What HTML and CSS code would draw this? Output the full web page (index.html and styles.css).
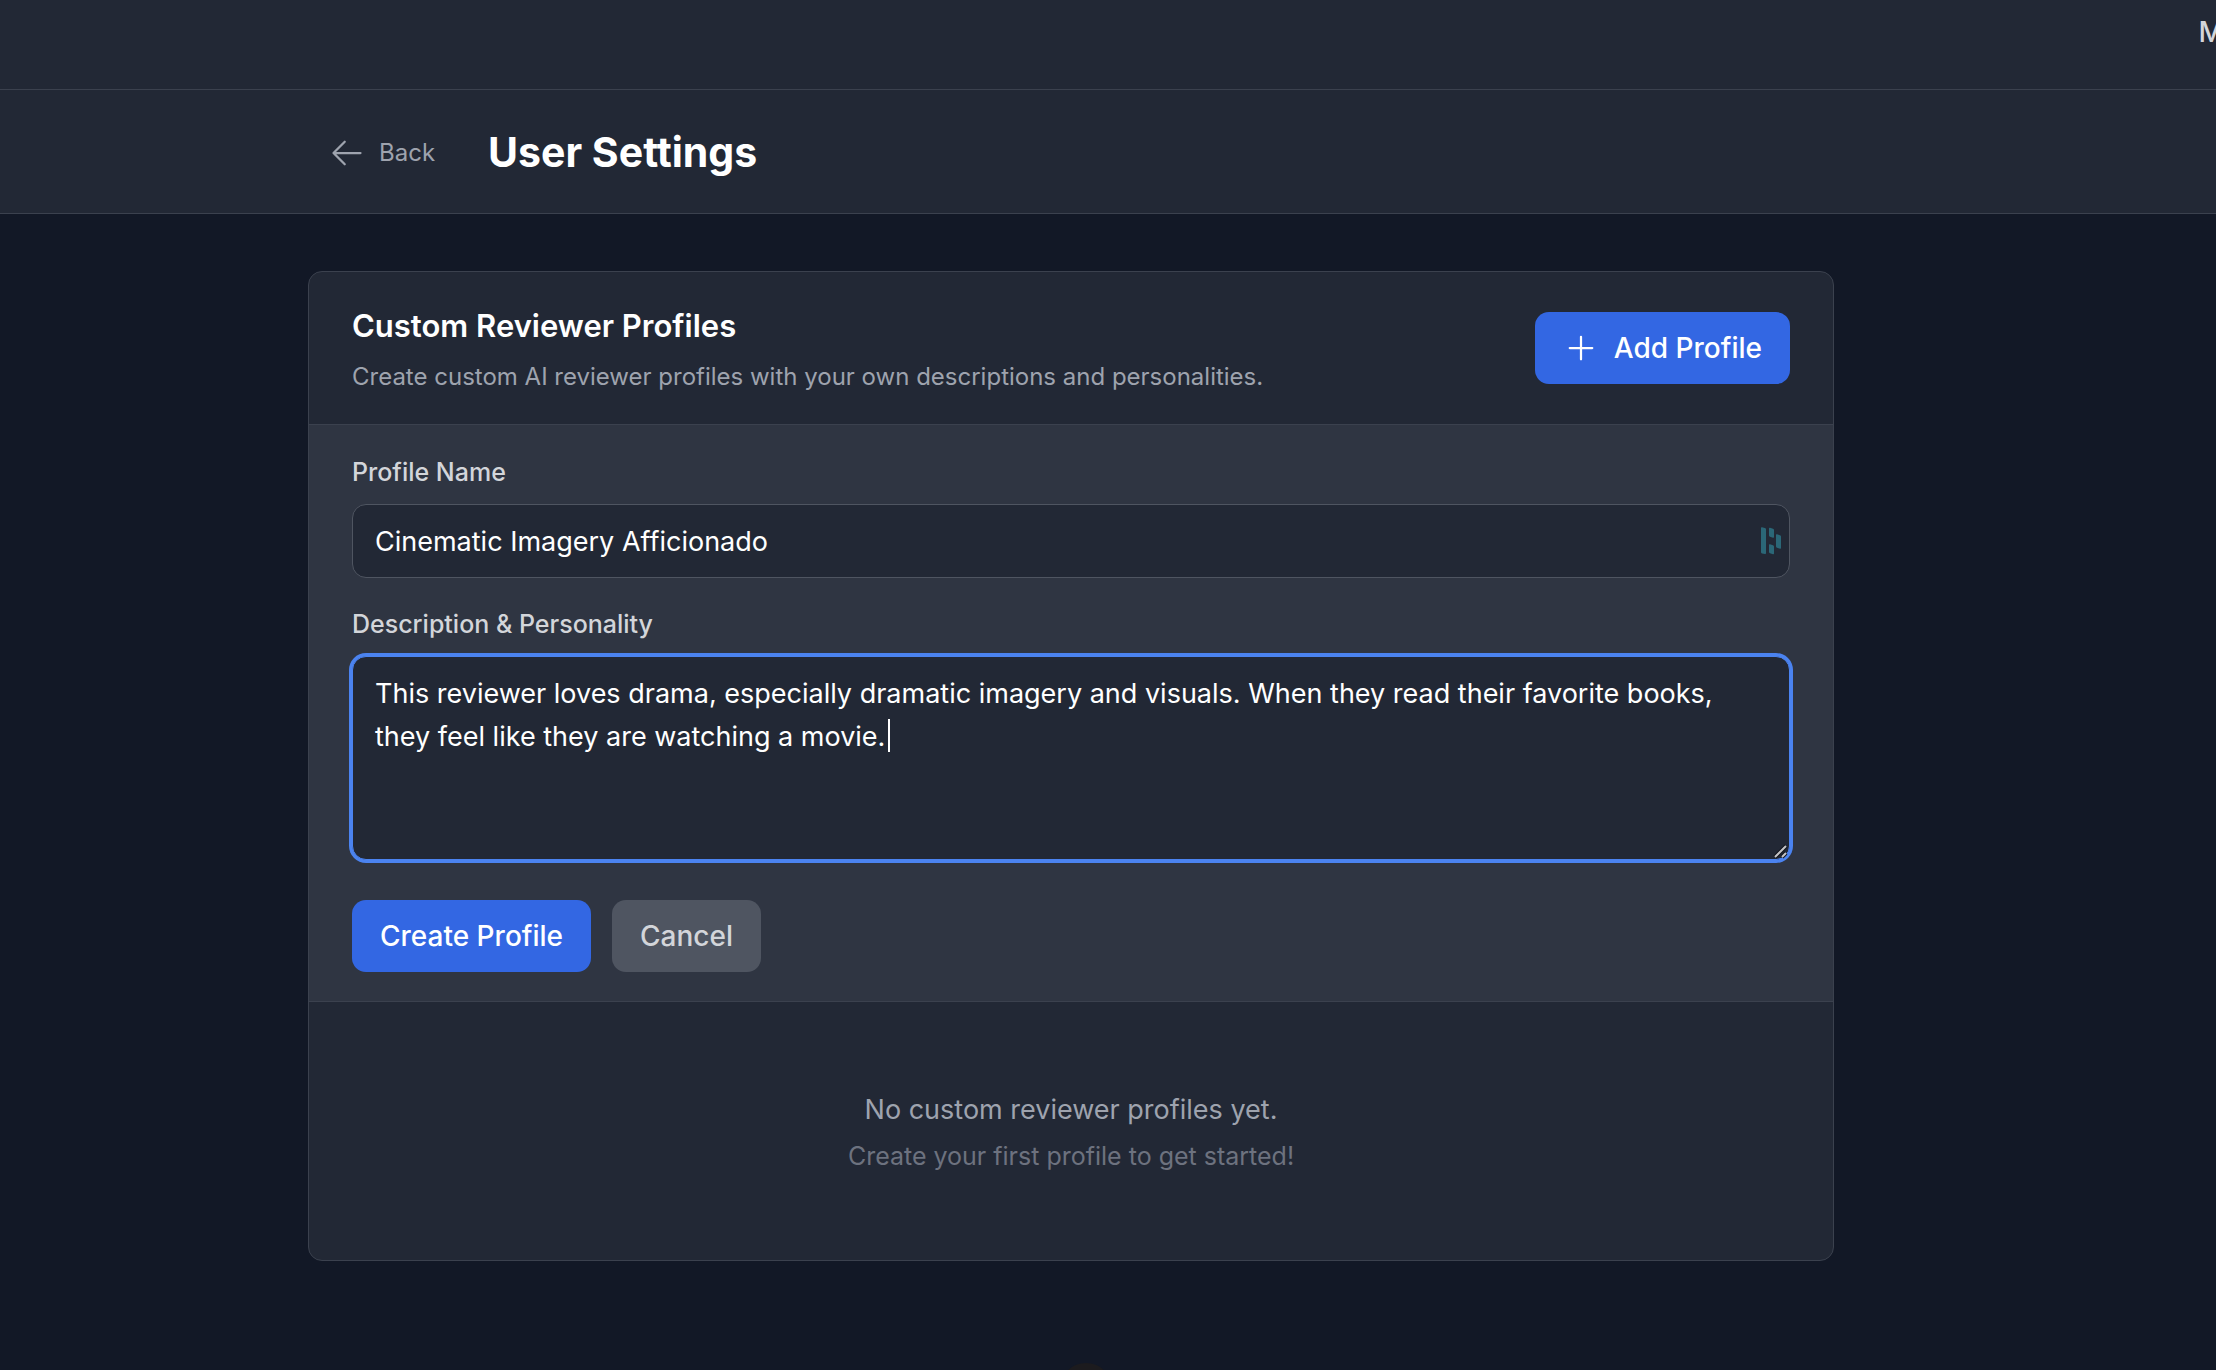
FILE: index.html
```html
<!DOCTYPE html>
<html lang="en">
<head>
<meta charset="utf-8">
<title>User Settings</title>
<link rel="stylesheet" href="styles.css">
</head>
<body>
<nav class="topbar"><a class="topbar-link" href="#">M</a></nav>

<header class="page-header">
  <div class="container page-header-row">
    <a class="back-link" href="#">
      <svg class="icon" viewBox="0 0 24 24" aria-hidden="true"><path d="M10.5 19.5 3 12m0 0 7.5-7.5M3 12h18"/></svg>
      Back
    </a>
    <h1 class="page-title">User Settings</h1>
  </div>
</header>

<main class="main">
  <section class="container card">
    <div class="card-header">
      <div>
        <h2 class="card-title">Custom Reviewer Profiles</h2>
        <p class="card-text">Create custom AI reviewer profiles with your own descriptions and personalities.</p>
      </div>
      <button class="button button-primary" type="button">
        <svg class="icon" viewBox="0 0 24 24" aria-hidden="true"><path d="M12 4.500v15m7.500-7.500h-15"/></svg>
        Add Profile
      </button>
    </div>

    <form class="form">
      <div class="field">
        <label class="label" for="profile-name">Profile Name</label>
        <div class="control">
          <input class="input" id="profile-name" type="text" value="Cinematic Imagery Afficionado">
          <svg class="input-badge" viewBox="0 0 20 28" aria-hidden="true">
            <path d="M0 1q0-1 1-.7l3 .8q1 .3 1 1.200V26q0 1.300-1 1.100l-3-.6q-1-.3-1-1.200zM8 1.500q0-1 1-.7l3 1q1 .3 1 1.200v7q0 1-1 .7l-3-1q-1-.3-1-1.200zM8 18q0-1 1-.7l3 1q1 .3 1 1.200v7q0 1-1 .7l-3-1q-1-.3-1-1.200zM15 8q0-1 1-.7l3 1q1 .3 1 1.200v11.500q0 1-1 .7l-3-1q-1-.3-1-1.200z"/>
          </svg>
        </div>
      </div>
      <div class="field">
        <label class="label" for="profile-description">Description &amp; Personality</label>
        <div class="control">
          <textarea class="input textarea is-focused" id="profile-description" rows="4">This reviewer loves drama, especially dramatic imagery and visuals. When they read their favorite books, they feel like they are watching a movie.</textarea>
          <span class="caret"></span>
          <svg class="resize-grip" viewBox="0 0 16 16" aria-hidden="true">
            <path class="grip-edge" d="M3 14 14 3M10 14l4-4"/>
            <path class="grip-line" d="M3 14 14 3M10 14l4-4"/>
          </svg>
        </div>
      </div>
      <div class="actions">
        <button class="button button-primary" type="button">Create Profile</button>
        <button class="button button-muted" type="button">Cancel</button>
      </div>
    </form>

    <div class="empty">
      <p class="empty-title">No custom reviewer profiles yet.</p>
      <p class="empty-hint">Create your first profile to get started!</p>
    </div>
  </section>
</main>
<div class="floating-dot"></div>
</body>
</html>
```
FILE: styles.css
```css
:root {
  --page: #121826;
  --panel: #222835;
  --raised: #2f3542;
  --line: #3b414e;
  --line-strong: #4f5561;
  --blue: #3367e3;
  --ring: #4b83f0;
  --text: #ffffff;
  --text-soft: #d3d5da;
  --text-muted: #9ea3ae;
  --text-faint: #6d727f;
}

* { box-sizing: border-box; }

body {
  margin: 0;
  min-height: 100vh;
  overflow: hidden;
  background: var(--page);
  color: var(--text);
  font-family: Inter, "Liberation Sans", sans-serif;
  font-size: 28px;
  line-height: 43px;
}

h1, h2, p { margin: 0; }
a { color: inherit; text-decoration: none; }

.container { max-width: 1526px; margin: 0 auto; }

.icon {
  flex: none;
  width: 36px;
  height: 36px;
  fill: none;
  stroke: currentColor;
  stroke-width: 1.5;
  stroke-linecap: round;
  stroke-linejoin: round;
}

.topbar {
  display: flex;
  justify-content: flex-end;
  height: 90px;
  padding-top: 11px;
  overflow: hidden;
  background: var(--panel);
  border-bottom: 1px solid var(--line);
}
.topbar-link { margin-right: -8px; color: var(--text-soft); font-weight: 500; }

.page-header {
  padding: 37px 74px 35px 0;
  background: var(--panel);
  border-bottom: 1px solid var(--line);
}
.page-header-row { display: flex; align-items: center; gap: 32px; }
.back-link {
  display: flex;
  align-items: center;
  gap: 14px;
  padding: 0 21px;
  color: var(--text-muted);
  font-size: 24px;
}
.page-title { font-size: 41px; font-weight: 700; line-height: 51px; }

.main { padding: 57px 74px 57px 0; }

.card {
  overflow: hidden;
  background: var(--panel);
  border: 1px solid var(--line);
  border-radius: 14px;
}
.card-header {
  display: flex;
  align-items: center;
  justify-content: space-between;
  padding: 29px 43px;
  border-bottom: 1px solid var(--line);
}
.card-title { margin-bottom: 8px; font-size: 31px; font-weight: 600; line-height: 50px; }
.card-text { color: var(--text-muted); font-size: 24px; line-height: 36px; }

.button {
  display: flex;
  align-items: center;
  gap: 15px;
  height: 72px;
  padding: 0 28px;
  border: 0;
  border-radius: 14px;
  font: inherit;
  font-weight: 500;
}
.button-primary { background: var(--blue); color: var(--text); }
.button-muted { background: var(--line-strong); color: var(--text-soft); }

.form {
  padding: 29px 43px;
  background: var(--raised);
  border-bottom: 1px solid var(--line);
}
.field { margin-bottom: 28px; }
.label {
  display: block;
  margin-bottom: 14px;
  color: var(--text-soft);
  font-size: 25px;
  font-weight: 500;
  line-height: 36px;
}
.control { position: relative; }
.input {
  display: block;
  width: 100%;
  height: 74px;
  padding: 15px 22px 14px;
  background: var(--panel);
  border: 1px solid var(--line-strong);
  border-radius: 14px;
  outline: 0;
  color: var(--text);
  font: inherit;
  font-size: 27px;
}
.input-badge {
  position: absolute;
  top: 23px;
  right: 9px;
  width: 20px;
  height: 28px;
  fill: #2b6777;
}
.textarea { height: 204px; resize: vertical; }
.textarea::-webkit-resizer { background: transparent; }
.is-focused { border-color: var(--ring); box-shadow: 0 0 0 3px var(--ring); }
.caret {
  position: absolute;
  top: 63px;
  left: 536px;
  width: 2px;
  height: 33px;
  background: var(--text);
}
.resize-grip {
  position: absolute;
  right: 2px;
  bottom: 1px;
  width: 16px;
  height: 16px;
  fill: none;
  pointer-events: none;
}
.grip-edge { stroke: #10141c; stroke-width: 4; }
.grip-line { stroke: #c4c4c6; stroke-width: 2; }
.actions { display: flex; gap: 21px; padding-top: 12px; }

.empty { padding: 86px 43px; text-align: center; }
.empty-title { margin-bottom: 7px; color: var(--text-muted); font-size: 27px; }
.empty-hint { color: var(--text-faint); font-size: 25px; line-height: 36px; }

.floating-dot {
  position: fixed;
  bottom: -47px;
  left: 49%;
  width: 54px;
  height: 54px;
  margin-left: -27px;
  border-radius: 50%;
  background: #1c1b1e;
}
```
